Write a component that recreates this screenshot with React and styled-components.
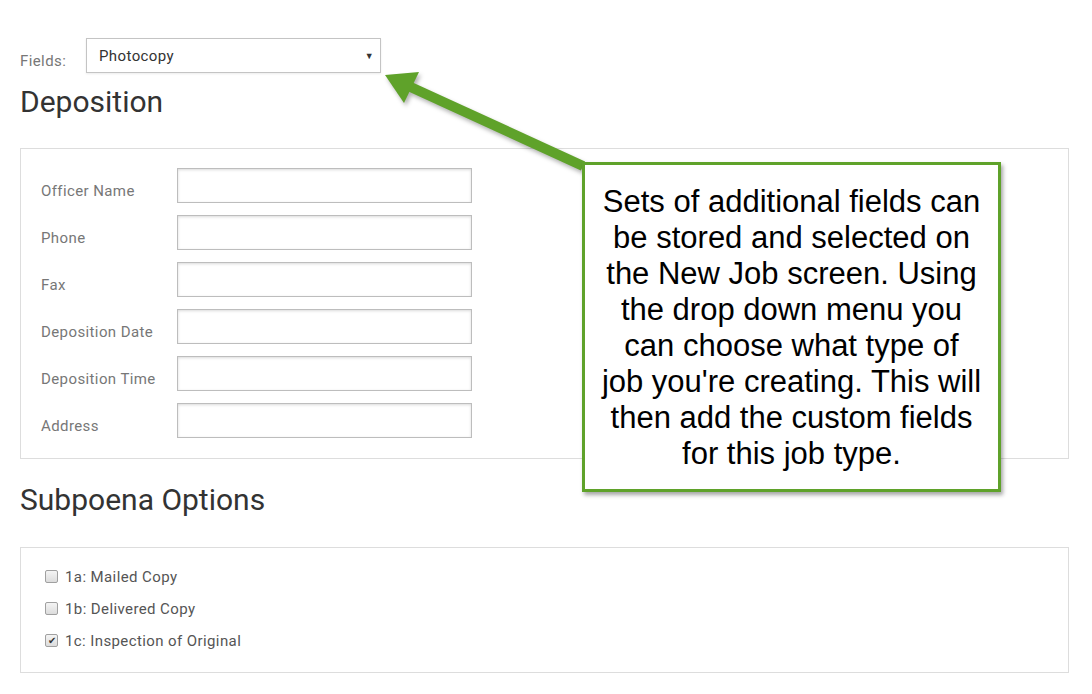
import React from 'react';
import styled, { createGlobalStyle } from 'styled-components';

const GlobalStyle = createGlobalStyle`
  html, body {
    margin: 0;
    padding: 0;
    background: #fff;
  }
  body {
    font-family: Roboto, "Noto Sans", sans-serif;
    color: #333;
  }
`;

const depositionFields = [
  'Officer Name',
  'Phone',
  'Fax',
  'Deposition Date',
  'Deposition Time',
  'Address',
];

const subpoenaOptions = [
  { label: '1a: Mailed Copy', checked: false },
  { label: '1b: Delivered Copy', checked: false },
  { label: '1c: Inspection of Original', checked: true },
];

const calloutLines = [
  'Sets of additional fields can',
  'be stored and selected on',
  'the New Job screen. Using',
  'the drop down menu you',
  'can choose what type of',
  "job you're creating. This will",
  'then add the custom fields',
  'for this job type.',
];

const App = () => {
  return (
    <Page>
      <GlobalStyle />

      {/* 상단 필드 선택 */}
      <FieldsRow>
        <FieldsLabel>Fields:</FieldsLabel>
        <Select>
          <span>Photocopy</span>
          <Caret>▼</Caret>
        </Select>
      </FieldsRow>

      <Heading>Deposition</Heading>
      <Panel padding="19px 20px 20px 20px">
        <FormList>
          {depositionFields.map(name => (
            <FormRow key={name}>
              <FormLabel>{name}</FormLabel>
              <Input />
            </FormRow>
          ))}
        </FormList>
      </Panel>

      <Heading top="25px" bottom="32px">
        Subpoena Options
      </Heading>
      <Panel padding="18px 24px 20px 24px">
        <CheckList>
          {subpoenaOptions.map(opt => (
            <CheckRow key={opt.label}>
              <CheckBox checked={opt.checked}>{opt.checked ? '✔' : ''}</CheckBox>
              <span>{opt.label}</span>
            </CheckRow>
          ))}
        </CheckList>
      </Panel>

      {/* 설명 화살표 + 말풍선 */}
      <Arrow width="1092" height="694" viewBox="0 0 1092 694">
        <line x1="583" y1="166" x2="404" y2="84" stroke="#5fa22a" strokeWidth="10" />
        <polygon points="385,75 419,72 404,103" fill="#5fa22a" />
      </Arrow>
      <Callout>
        {calloutLines.map(line => (
          <CalloutLine key={line}>{line}</CalloutLine>
        ))}
      </Callout>
    </Page>
  );
};

const Page = styled.div`
  position: relative;
  width: 1092px;
  height: 694px;
  box-sizing: border-box;
  padding: 38px 23px 0 20px;
  overflow: hidden;
`;

const FieldsRow = styled.div`
  display: flex;
  align-items: center;
  gap: 20px;
`;

const FieldsLabel = styled.label`
  font-size: 15px;
  letter-spacing: 0.4px;
  color: #777;
  margin-top: 10px;
  width: 46px;
`;

const Select = styled.div`
  width: 295px;
  height: 35px;
  box-sizing: border-box;
  border: 1px solid #c4c4c4;
  box-shadow: 0 1px 2px rgba(0, 0, 0, 0.08);
  display: flex;
  align-items: flex-start;
  justify-content: space-between;
  padding: 8px 6px 0 12px;
  font-size: 15px;
  letter-spacing: 0.4px;
  color: #333;
`;

const Caret = styled.span`
  font-size: 9px;
  color: #333;
  margin-top: 4px;
`;

const Heading = styled.h2`
  margin: ${props => props.top || '13px'} 0 ${props => props.bottom || '31px'} 0;
  font-size: 30px;
  line-height: 31px;
  font-weight: 400;
  color: #333;
`;

const Panel = styled.div`
  border: 1px solid #ddd;
  padding: ${props => props.padding};
`;

const FormList = styled.div`
  display: flex;
  flex-direction: column;
  gap: 12px;
`;

const FormRow = styled.div`
  display: flex;
  align-items: flex-start;
`;

const FormLabel = styled.label`
  width: 136px;
  font-size: 15px;
  letter-spacing: 0.4px;
  color: #777;
  padding-top: 15px;
  line-height: 16px;
`;

const Input = styled.div`
  width: 295px;
  height: 35px;
  box-sizing: border-box;
  border: 1px solid #bdbdbd;
  box-shadow: inset 0 1px 3px rgba(0, 0, 0, 0.15);
  background: #fff;
`;

const CheckList = styled.div`
  display: flex;
  flex-direction: column;
  gap: 10px;
`;

const CheckRow = styled.div`
  display: flex;
  align-items: center;
  gap: 7px;
  height: 22px;
  font-size: 15px;
  letter-spacing: 0.4px;
  color: #555;
`;

const CheckBox = styled.span`
  width: 13px;
  height: 13px;
  box-sizing: border-box;
  border: 1px solid #a0a0a0;
  border-radius: 2px;
  background: linear-gradient(#f4f4f4, #dcdcdc);
  display: flex;
  align-items: center;
  justify-content: center;
  font-size: 10px;
  letter-spacing: 0;
  line-height: 1;
  color: #333;
  margin-top: -1px;
`;

const Arrow = styled.svg`
  position: absolute;
  left: 0;
  top: 0;
  pointer-events: none;
  filter: drop-shadow(2px 3px 2px rgba(0, 0, 0, 0.3));
`;

const Callout = styled.div`
  position: absolute;
  left: 582px;
  top: 162px;
  width: 419px;
  height: 330px;
  box-sizing: border-box;
  border: 3px solid #5fa22a;
  background: #fff;
  box-shadow: 2px 3px 4px rgba(0, 0, 0, 0.35);
  padding-top: 19px;
  font-family: "Liberation Sans", Arial, sans-serif;
  font-size: 31px;
  line-height: 36px;
  color: #000;
  text-align: center;
`;

const CalloutLine = styled.div`
  white-space: nowrap;
`;

export default App;
